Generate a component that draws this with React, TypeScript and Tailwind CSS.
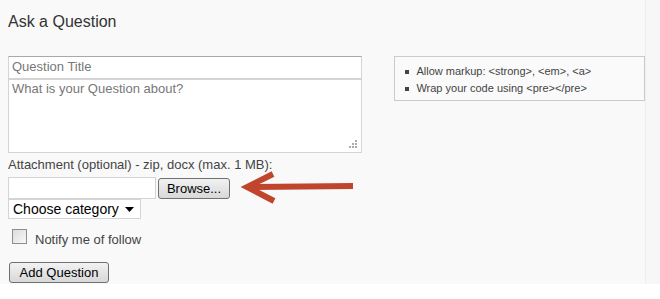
export default function App() {
  return (
    <div className="flex h-[299px] w-[660px] flex-col bg-white font-['Liberation_Sans',Arial,sans-serif] text-[#333]">
      <div className="flex h-[284px] bg-[#f9f9f9]">
        <div className="flex w-[645px] flex-col pl-2">
          <h1 className="pt-[12px] text-[16px] leading-[20px] text-[#333]">Ask a Question</h1>

          <div className="mt-[24px] flex gap-[32px]">
            {/* 表单主体 */}
            <div className="flex w-[355px] flex-col">
              <div className="h-[23px] border border-[#d4d4d4] border-t-[#a9a9a9] bg-white px-[3px] text-[13px] leading-[20px] text-[#777]">
                Question Title
              </div>
              <div className="relative h-[74px] border border-[#d4d4d4] bg-white px-[3px] text-[13px] leading-[18px] text-[#777]">
                What is your Question about?
                <svg className="absolute bottom-[3px] right-[3px]" width="9" height="9" viewBox="0 0 9 9">
                  <rect x="6" y="0" width="2" height="2" fill="#aaa" />
                  <rect x="3" y="3" width="2" height="2" fill="#aaa" />
                  <rect x="6" y="3" width="2" height="2" fill="#aaa" />
                  <rect x="0" y="6" width="2" height="2" fill="#aaa" />
                  <rect x="3" y="6" width="2" height="2" fill="#aaa" />
                  <rect x="6" y="6" width="2" height="2" fill="#aaa" />
                </svg>
              </div>
            </div>

            {/* 提示框 */}
            <div className="h-[45px] w-[251px] border border-[#cbcbcb] bg-[#fafafa] pl-[10px] pt-[6px] text-[11px] leading-[17px] text-[#444]">
              <ul>
                <li className="flex items-center gap-[7px]">
                  <span className="h-[4px] w-[4px] bg-[#444]" />
                  {'Allow markup: <strong>, <em>, <a>'}
                </li>
                <li className="flex items-center gap-[7px]">
                  <span className="h-[4px] w-[4px] bg-[#444]" />
                  {'Wrap your code using <pre></pre>'}
                </li>
              </ul>
            </div>
          </div>

          <p className="mt-[3px] text-[13px] leading-[18px] text-[#444]">
            Attachment (optional) - zip, docx (max. 1 MB):
          </p>

          <div className="mt-[3px] flex h-[22px] items-center">
            <div className="h-[22px] w-[148px] border border-[#d4d4d4] bg-white" />
            <button className="ml-[2px] h-[21px] w-[72px] rounded-[3px] border border-[#707070] bg-gradient-to-b from-[#f2f2f2] to-[#d8d8d8] text-[13px] leading-[19px] text-black">
              Browse...
            </button>
            <svg className="-my-[6px] ml-[11px] shrink-0" width="114" height="34" viewBox="0 0 114 34">
              <path d="M112 15 L 12 16" stroke="#c0452d" strokeWidth="6" fill="none" />
              <path d="M32 3 L 6 16 L 33 30" stroke="#c0452d" strokeWidth="6" fill="none" strokeLinejoin="miter" />
            </svg>
          </div>

          <div className="flex h-[20px] w-[133px] items-center justify-between border border-[#d4d4d4] bg-white pl-[4px] pr-[6px] text-[14px] text-black">
            Choose category
            <svg width="9" height="5" viewBox="0 0 9 5">
              <path d="M0 0 H9 L4.5 5 Z" fill="#000" />
            </svg>
          </div>

          <label className="ml-[4px] mt-[10px] flex items-start gap-[8px] text-[13px] leading-[16px] text-[#444]">
            <span className="h-[15px] w-[15px] border border-[#8e8e8e] bg-gradient-to-br from-[#dcdcdc] to-[#f8f8f8]" />
            <span className="pt-[3px]">Notify me of follow</span>
          </label>

          <button className="ml-[1px] mt-[14px] h-[21px] w-[100px] rounded-[3px] border border-[#707070] bg-gradient-to-b from-[#f2f2f2] to-[#d8d8d8] text-[13px] leading-[19px] text-black">
            Add Question
          </button>
        </div>
        <div className="w-[15px] border-l border-[#eee] bg-[#f7f7f7]" />
      </div>
    </div>
  )
}
